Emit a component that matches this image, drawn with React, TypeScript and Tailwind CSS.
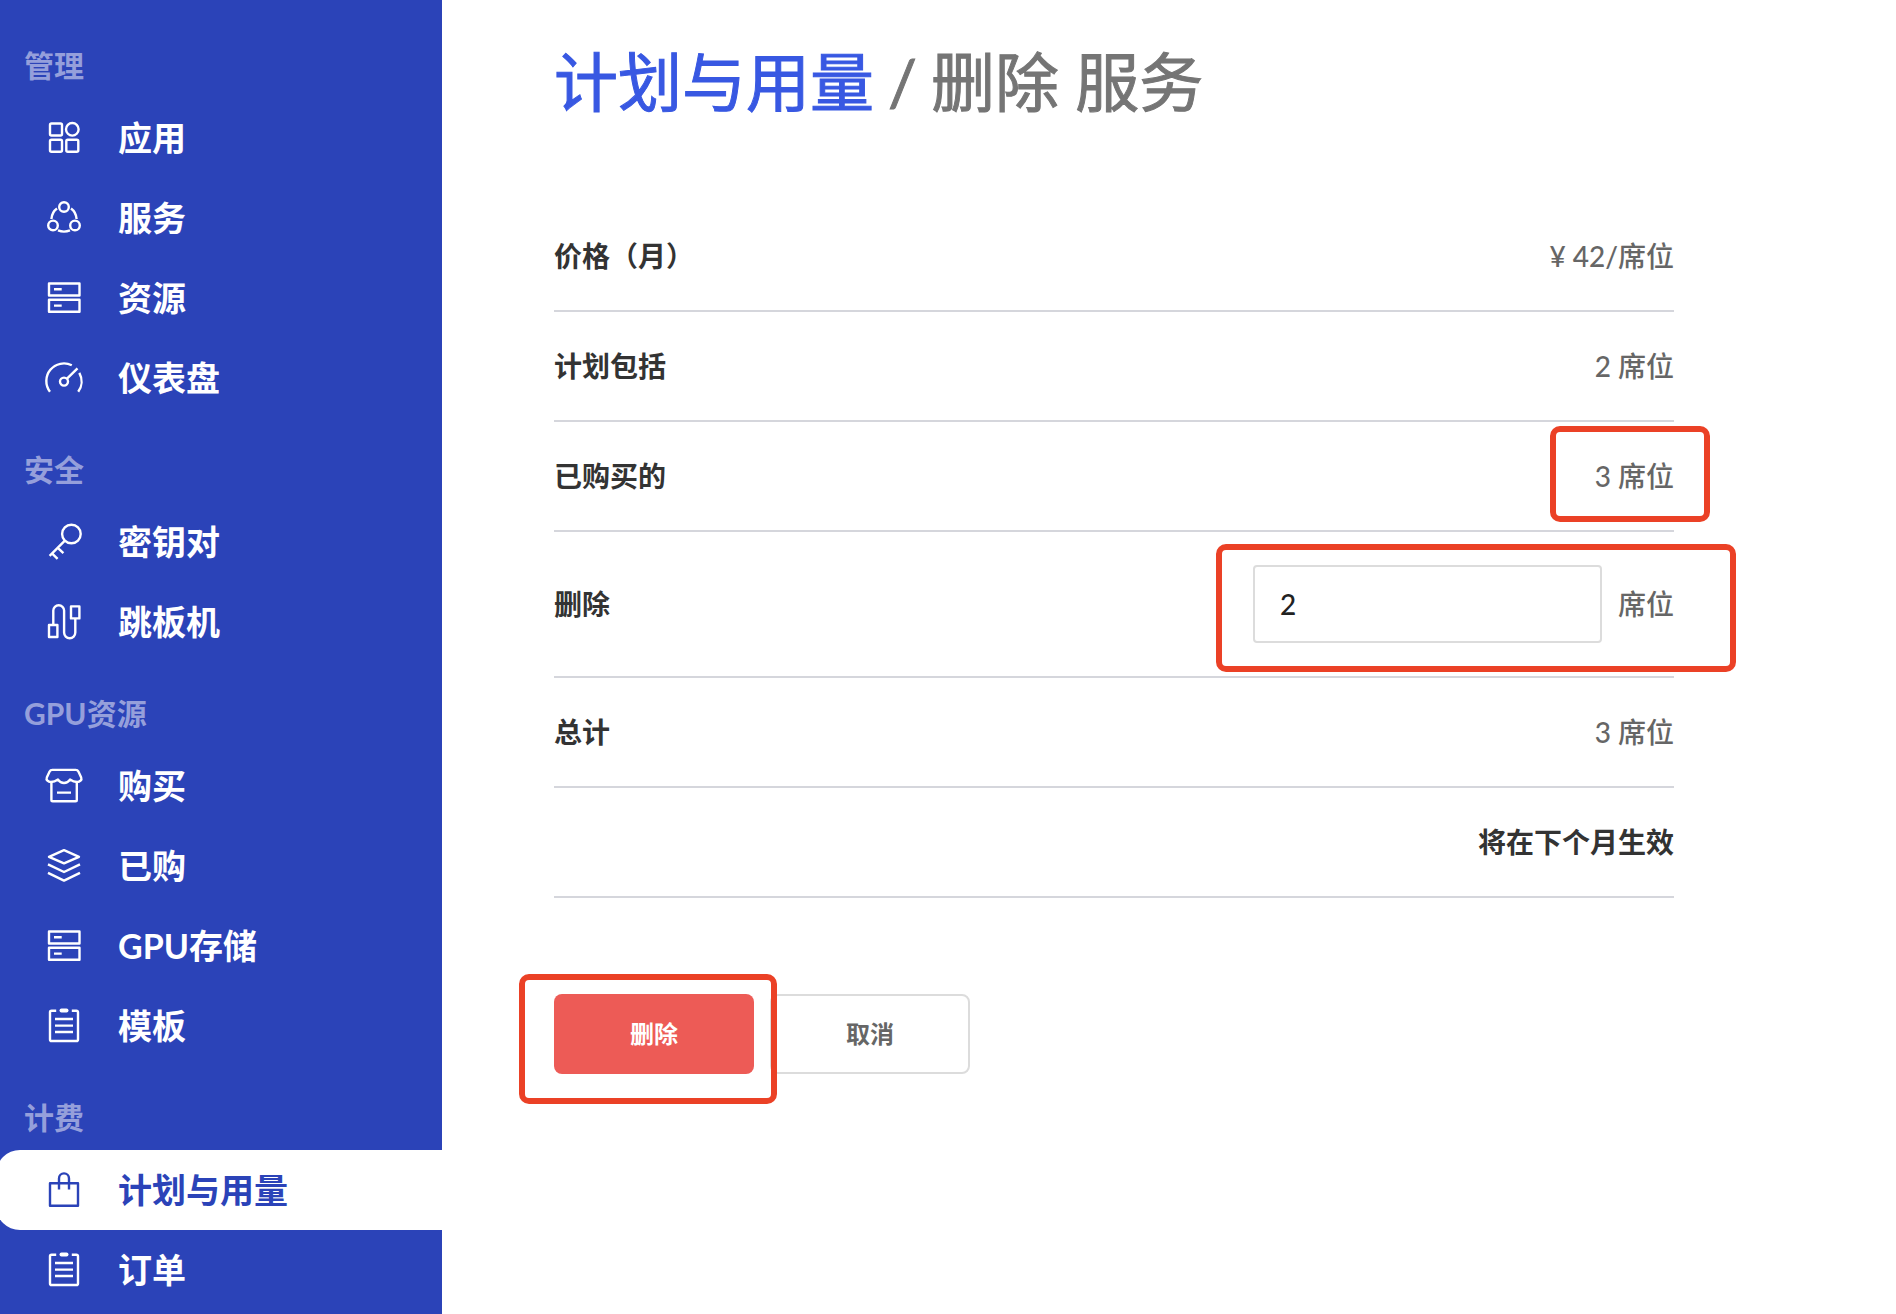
import React, { useState } from "react";

const iconPaths: Record<string, React.ReactNode> = {
  apps: (
    <>
      <rect x="6" y="5.5" width="12" height="12" rx="1.5" />
      <circle cx="28.3" cy="11.3" r="6.3" />
      <rect x="6" y="21.8" width="12" height="12" rx="1.5" />
      <rect x="22.3" y="21.8" width="12" height="12" rx="1.5" />
    </>
  ),
  services: (
    <>
      <circle cx="20" cy="9" r="4.8" />
      <circle cx="9" cy="27.4" r="4.8" />
      <circle cx="31" cy="27.4" r="4.8" />
      <path d="M7.4 21C7.8 16.5 9.6 13 13 10.6M32.6 21C32.2 16.5 30.4 13 27 10.6M14 32.4Q20 34.8 26 32.4" />
    </>
  ),
  storage: (
    <>
      <rect x="5" y="5.5" width="30.5" height="12" />
      <rect x="5" y="21.8" width="30.5" height="12" />
      <path d="M10 11.2H17.7M10 27.6H17.7" />
    </>
  ),
  gauge: (
    <>
      <circle cx="20" cy="23.6" r="4" />
      <path d="M23 20.6L33.5 10.4M6 33.8A17.6 17.6 0 0 1 27.8 7.3M35.3 14.8A17.6 17.6 0 0 1 34.2 33.8" />
    </>
  ),
  key: (
    <>
      <circle cx="27.4" cy="12" r="9.3" />
      <path d="M20.6 18.8L5.6 33.8M8 31.4L13.6 36.8M13.8 25.8L19.4 31.2" />
    </>
  ),
  cable: (
    <>
      <rect x="5" y="23" width="8.4" height="12" />
      <rect x="27" y="4.4" width="8.4" height="12" />
      <path d="M9.3 23V8.6A5.4 5.4 0 0 1 20.1 8.6V30.6A5.6 5.6 0 0 0 31.3 30.6V16.4" />
    </>
  ),
  store: (
    <>
      <path d="M8.4 3.9H31.6Q33.6 3.9 34.4 5.6L37.2 11.6C38.2 14 35.8 16 33.2 16C30.4 16 28 15 26 13.6Q23.6 17 20 17Q16.4 17 14 13.6C12 15 9.6 16 6.8 16C4.2 16 1.8 14 2.8 11.6L5.6 5.6Q6.4 3.9 8.4 3.9Z" />
      <path d="M7.4 16V34Q7.4 35.3 8.7 35.3H31.5Q32.8 35.3 32.8 34V16M13 26.6H27" />
    </>
  ),
  layers: <path d="M20 4.2L35 10.8L20 17.4L5 10.8ZM4 18.4L20 26L36 18.4M4 26.8L20 34.6L36 26.8" />,
  clipboard: (
    <>
      <path d="M12.2 4.7H7.6Q6 4.7 6 6.3V33.4Q6 35 7.6 35H32.4Q34 35 34 33.4V6.3Q34 4.7 32.4 4.7H27.8M11 13H29M11 19.6H29M11 26H29" />
      <path d="M17.5 4.4H22.5" strokeWidth="4" strokeLinecap="round" />
    </>
  ),
  bag: (
    <>
      <rect x="6" y="13.2" width="28" height="22.6" />
      <path d="M15 19.4V8.4A5 5 0 0 1 25 8.4V19.4" />
    </>
  ),
};

function Icon({ name }: { name: string }) {
  return (
    <svg viewBox="0 0 40 40" className="size-10 shrink-0" fill="none" stroke="currentColor" strokeWidth="2.4" strokeLinejoin="round" aria-hidden="true">
      {iconPaths[name]}
    </svg>
  );
}

const sections = [
  {
    title: "管理",
    items: [
      { label: "应用", icon: "apps" },
      { label: "服务", icon: "services" },
      { label: "资源", icon: "storage" },
      { label: "仪表盘", icon: "gauge" },
    ],
  },
  {
    title: "安全",
    items: [
      { label: "密钥对", icon: "key" },
      { label: "跳板机", icon: "cable" },
    ],
  },
  {
    title: "GPU资源",
    items: [
      { label: "购买", icon: "store" },
      { label: "已购", icon: "layers" },
      { label: "GPU存储", icon: "storage" },
      { label: "模板", icon: "clipboard" },
    ],
  },
  {
    title: "计费",
    items: [
      { label: "计划与用量", icon: "bag", active: true },
      { label: "订单", icon: "clipboard" },
    ],
  },
];

function Sidebar() {
  return (
    <nav className="w-[442px] shrink-0 overflow-hidden bg-[#2b43b8] pt-3.5">
      {sections.map((section) => (
        <section key={section.title}>
          <h2 className="flex h-[84px] items-center pt-[18px] pl-6 text-[30px] leading-10 font-bold text-[#959fdb]">{section.title}</h2>
          <ul>
            {section.items.map((item) => (
              <li key={item.label}>
                <a
                  href="#"
                  aria-current={item.active ? "page" : undefined}
                  className={
                    "-ml-1 flex h-20 items-center gap-[34px] pl-12 text-[34px] leading-10 font-bold " +
                    (item.active ? "rounded-l-3xl bg-white text-[#2b43b8]" : "text-white")
                  }
                >
                  <Icon name={item.icon} />
                  <span>{item.label}</span>
                </a>
              </li>
            ))}
          </ul>
        </section>
      ))}
    </nav>
  );
}

function Row({ label, children }: { label: string; children: React.ReactNode }) {
  return (
    <tr className="border-b-2 border-[#d5d6dc]">
      <th scope="row" className="text-left font-bold text-[#333]">
        {label}
      </th>
      <td className="relative py-[34px] text-right text-[#666]">{children}</td>
    </tr>
  );
}

function Highlight({ className }: { className: string }) {
  return <span aria-hidden="true" className={"pointer-events-none absolute rounded-[10px] border-6 border-[#eb4126] " + className} />;
}

export default function App() {
  const [count, setCount] = useState("2");
  return (
    <div className="flex min-h-screen bg-white font-['Lato','Noto_Sans_CJK_SC',sans-serif]">
      <Sidebar />
      <main className="min-w-0 flex-1 pt-[42px] pr-[222px] pl-28">
        <h1 className="flex gap-3.5 text-[64px] leading-[80px] text-[#757575] [-webkit-text-stroke:1px_currentColor]">
          <a href="#" className="text-[#3858e2]">
            计划与用量
          </a>
          <span>/</span>
          <span>删除 服务</span>
        </h1>
        <table className="mt-20 w-full border-collapse text-[28px] leading-10 font-medium">
          <tbody>
            <Row label="价格（月）">¥ 42/席位</Row>
            <Row label="计划包括">2 席位</Row>
            <Row label="已购买的">
              3 席位
              <Highlight className="-right-9 top-1 h-24 w-40" />
            </Row>
            <tr className="border-b-2 border-[#d5d6dc]">
              <th scope="row" className="text-left font-bold text-[#333]">
                <label htmlFor="seats">删除</label>
              </th>
              <td className="relative py-[33px] text-[#666]">
                <div className="flex items-center justify-end gap-4">
                  <input
                    id="seats"
                    type="text"
                    inputMode="numeric"
                    value={count}
                    onChange={(e) => setCount(e.target.value)}
                    className="h-[78px] w-[349px] rounded border-2 border-[#dcdcdc] bg-white px-[25px] text-[#222] outline-none"
                  />
                  <span>席位</span>
                </div>
                <Highlight className="-right-[62px] top-3 h-32 w-[520px]" />
              </td>
            </tr>
            <Row label="总计">3 席位</Row>
            <tr className="border-b-2 border-[#d5d6dc]">
              <td colSpan={2} className="py-[34px] text-right font-bold text-[#333]">
                将在下个月生效
              </td>
            </tr>
          </tbody>
        </table>
        <div className="mt-24 flex gap-4 text-2xl font-bold">
          <div className="relative">
            <button type="button" className="h-20 w-[200px] rounded-lg bg-[#ed5b56] text-white">
              删除
            </button>
            <Highlight className="-top-5 -left-[35px] z-10 h-[130px] w-[258px]" />
          </div>
          <button type="button" className="h-20 w-[200px] rounded-lg border-2 border-[#dcdcdc] bg-white text-[#666]">
            取消
          </button>
        </div>
      </main>
    </div>
  );
}
